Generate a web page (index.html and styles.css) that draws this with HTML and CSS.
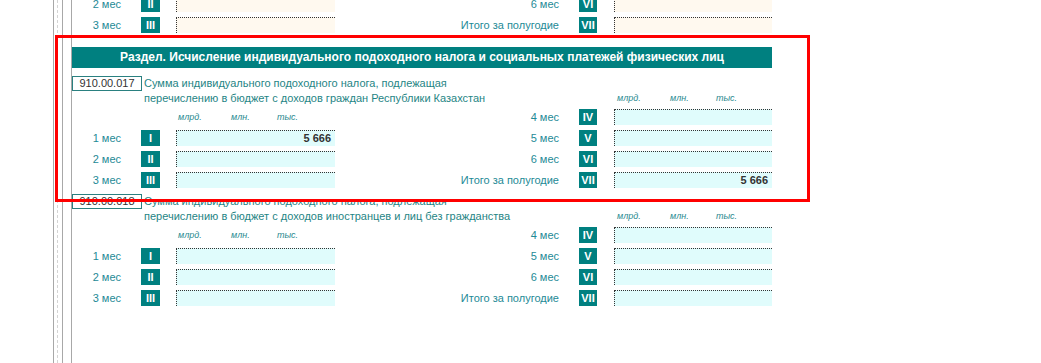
FILE: index.html
```html
<!DOCTYPE html>
<html lang="ru">
<head>
<meta charset="utf-8">
<title>Раздел</title>
<link rel="stylesheet" href="styles.css">
</head>
<body>
<div class="page">
  <div class="rail">
    <div class="ln"></div>
    <div class="ln dash"></div>
    <div class="ln l3"></div>
    <div class="ln l4"></div>
  </div>
  <div class="content">
    <div class="rows prev">
      <div class="lbl c1">2 мес</div><div class="bdg b1">II</div><div class="fld f1 cream"></div>
      <div class="lbl c2">6 мес</div><div class="bdg b2">VI</div><div class="fld f2 cream"></div>
      <div class="lbl c1">3 мес</div><div class="bdg b1">III</div><div class="fld f1 cream"></div>
      <div class="lbl c2">Итого за полугодие</div><div class="bdg b2">VII</div><div class="fld f2 cream"></div>
    </div>

    <div class="title">Раздел. Исчисление индивидуального подоходного налога и социальных платежей физических лиц</div>

    <div class="item">
      <div class="head">
        <div class="code">910.00.017</div>
        <div class="desc">Сумма индивидуального подоходного налога, подлежащая<br>перечислению в бюджет с доходов граждан Республики Казахстан</div>
        <div class="units u-right"><span>млрд.</span><span>млн.</span><span>тыс.</span></div>
      </div>
      <div class="rows">
        <div class="units f1"><span>млрд.</span><span>млн.</span><span>тыс.</span></div>
        <div class="lbl c2">4 мес</div><div class="bdg b2">IV</div><div class="fld f2"></div>
        <div class="lbl c1">1 мес</div><div class="bdg b1">I</div><div class="fld f1">5 666</div>
        <div class="lbl c2">5 мес</div><div class="bdg b2">V</div><div class="fld f2"></div>
        <div class="lbl c1">2 мес</div><div class="bdg b1">II</div><div class="fld f1"></div>
        <div class="lbl c2">6 мес</div><div class="bdg b2">VI</div><div class="fld f2"></div>
        <div class="lbl c1">3 мес</div><div class="bdg b1">III</div><div class="fld f1"></div>
        <div class="lbl c2">Итого за полугодие</div><div class="bdg b2">VII</div><div class="fld f2">5 666</div>
      </div>
    </div>

    <div class="item">
      <div class="head">
        <div class="code">910.00.018</div>
        <div class="desc">Сумма индивидуального подоходного налога, подлежащая<br>перечислению в бюджет с доходов иностранцев и лиц без гражданства</div>
        <div class="units u-right"><span>млрд.</span><span>млн.</span><span>тыс.</span></div>
      </div>
      <div class="rows">
        <div class="units f1"><span>млрд.</span><span>млн.</span><span>тыс.</span></div>
        <div class="lbl c2">4 мес</div><div class="bdg b2">IV</div><div class="fld f2"></div>
        <div class="lbl c1">1 мес</div><div class="bdg b1">I</div><div class="fld f1"></div>
        <div class="lbl c2">5 мес</div><div class="bdg b2">V</div><div class="fld f2"></div>
        <div class="lbl c1">2 мес</div><div class="bdg b1">II</div><div class="fld f1"></div>
        <div class="lbl c2">6 мес</div><div class="bdg b2">VI</div><div class="fld f2"></div>
        <div class="lbl c1">3 мес</div><div class="bdg b1">III</div><div class="fld f1"></div>
        <div class="lbl c2">Итого за полугодие</div><div class="bdg b2">VII</div><div class="fld f2"></div>
      </div>
    </div>
  </div>
  <div class="highlight"></div>
</div>
</body>
</html>
```

FILE: styles.css
```css
html, body {
  margin: 0;
  padding: 0;
  background: #ffffff;
}
body {
  font-family: "Liberation Sans", Arial, sans-serif;
  font-size: 11px;
  color: #333333;
}
.page {
  position: relative;
  display: flex;
  height: 363px;
  overflow: hidden;
}
.rail {
  display: flex;
  width: 19px;
  padding-left: 53px;
  flex: none;
}
.ln {
  width: 0;
  border-left: 1px solid #a8a8a8;
}
.ln.dash {
  margin-left: 3px;
  border-left: 1px dashed #d4d4d4;
}
.ln.l3 {
  margin-left: 4px;
}
.ln.l4 {
  margin-left: 8px;
}
.content {
  width: 700px;
  flex: none;
}
.rows {
  display: grid;
  grid-template-columns: 69px 19px 16px 159px 244px 18px 17px 158px;
  grid-auto-rows: 16px;
  row-gap: 5px;
}
.rows.prev {
  margin-top: -4px;
}
.c1 { grid-column: 1; }
.b1 { grid-column: 2; }
.f1 { grid-column: 4; }
.c2 { grid-column: 5; }
.b2 { grid-column: 6; }
.f2 { grid-column: 8; }
.lbl {
  text-align: right;
  padding-right: 20px;
  line-height: 16px;
  color: #1e8a96;
  white-space: nowrap;
}
.bdg {
  background: #008080;
  color: #ffffff;
  font-weight: bold;
  text-align: center;
  line-height: 16px;
}
.fld {
  box-sizing: border-box;
  border-top: 1px dotted #333333;
  border-left: 1px dotted #333333;
  background: #e0fcfc;
  text-align: right;
  padding-right: 4px;
  font-weight: bold;
  line-height: 15px;
  color: #333333;
}
.fld.cream {
  background: #fff9ef;
}
.title {
  margin-top: 14px;
  height: 21px;
  line-height: 21px;
  background: #008080;
  color: #ffffff;
  font-weight: bold;
  font-size: 12px;
  text-align: center;
}
.item {
  padding-top: 8px;
}
.item + .item {
  padding-top: 6px;
}
.head {
  display: grid;
  grid-template-columns: 70px 472px 158px;
  grid-template-rows: 15px 15px;
  margin-bottom: 3px;
}
.code {
  grid-column: 1;
  grid-row: 1;
  box-sizing: border-box;
  height: 15px;
  border: 1px solid #2a8080;
  text-align: center;
  line-height: 13px;
  color: #333333;
}
.desc {
  grid-column: 2;
  grid-row: 1 / 3;
  padding-left: 2px;
  line-height: 15px;
  color: #1f8585;
  white-space: nowrap;
}
.units {
  display: flex;
  padding-left: 2px;
  font-size: 9px;
  font-style: italic;
  color: #2a8a90;
  line-height: 16px;
}
.units.u-right {
  grid-column: 3;
  grid-row: 2;
  line-height: 15px;
  padding-left: 3px;
}
.units span:nth-child(1) { width: 53px; }
.units span:nth-child(2) { width: 46px; }
.highlight {
  position: absolute;
  left: 55px;
  top: 35px;
  width: 755px;
  height: 167px;
  box-sizing: border-box;
  border: 3px solid #ff0000;
  pointer-events: none;
}
```
